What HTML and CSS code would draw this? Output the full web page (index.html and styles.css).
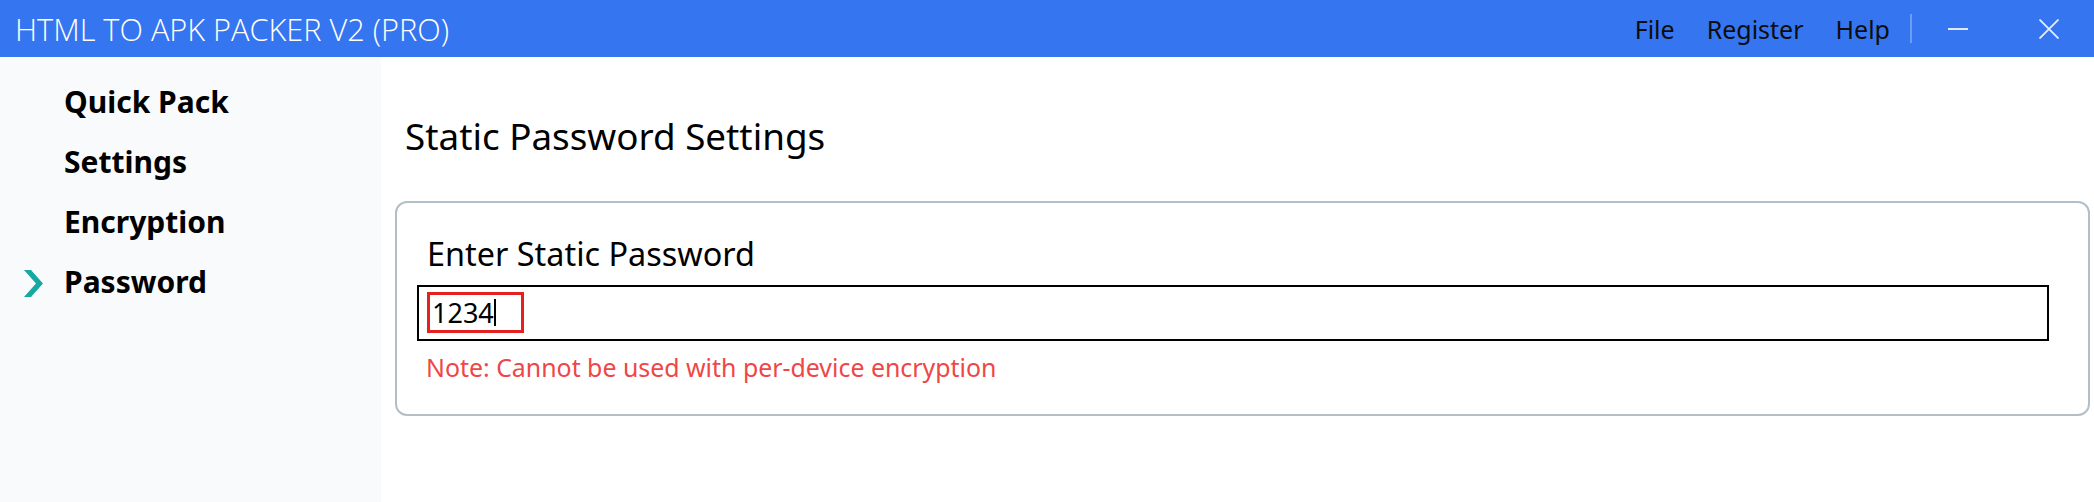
FILE: index.html
```html
<!DOCTYPE html>
<html lang="en">
<head>
<meta charset="utf-8">
<title>HTML TO APK PACKER V2 (PRO)</title>
<link rel="stylesheet" href="styles.css">
</head>
<body>
<div class="window">
  <header class="titlebar">
    <div class="title">HTML TO APK PACKER V2 (PRO)</div>
    <nav class="menu">
      <span class="menu-item">File</span>
      <span class="menu-item">Register</span>
      <span class="menu-item">Help</span>
    </nav>
    <div class="sep"></div>
    <div class="winbtn">
      <svg width="20" height="20" viewBox="0 0 20 20"><line x1="0" y1="10" x2="20" y2="10" stroke="#dfe8fd" stroke-width="2"/></svg>
    </div>
    <div class="winbtn close">
      <svg width="20" height="20" viewBox="0 0 20 20"><path d="M0.5 0.5 L19.5 19.5 M19.5 0.5 L0.5 19.5" stroke="#e6eefd" stroke-width="1.8" fill="none"/></svg>
    </div>
  </header>
  <div class="body">
    <aside class="sidebar">
      <div class="nav-item"><span class="marker"></span><span class="nav-text">Quick Pack</span></div>
      <div class="nav-item"><span class="marker"></span><span class="nav-text">Settings</span></div>
      <div class="nav-item"><span class="marker"></span><span class="nav-text">Encryption</span></div>
      <div class="nav-item active"><span class="marker"><svg width="19" height="27" viewBox="0 0 19 27"><polygon points="0,0 7,0 19,13.5 7,27 0,27 12,13.5" fill="#17a8a1"/></svg></span><span class="nav-text">Password</span></div>
    </aside>
    <main class="main">
      <h1 class="heading">Static Password Settings</h1>
      <section class="card">
        <div class="label">Enter Static Password</div>
        <div class="input"><span class="highlight"><span class="value">1234</span><span class="caret"></span></span></div>
        <div class="note">Note: Cannot be used with per-device encryption</div>
      </section>
    </main>
  </div>
</div>
</body>
</html>
```

FILE: styles.css
```css
* { box-sizing: border-box; }
html, body { margin: 0; padding: 0; }
body {
  width: 2094px;
  height: 502px;
  overflow: hidden;
  font-family: "Noto Sans", "Open Sans", "DejaVu Sans", sans-serif;
  color: #000;
  background: #fff;
}
.window { display: flex; flex-direction: column; height: 502px; }

.titlebar {
  height: 57px;
  flex: none;
  background: #3575f0;
  display: flex;
  align-items: center;
}
.title {
  flex: 1;
  padding-left: 15px;
  font-family: "Open Sans", "Noto Sans", sans-serif;
  font-weight: 300;
  font-size: 30.7px;
  color: #fff;
  white-space: nowrap;
}
.menu { display: flex; gap: 32px; align-items: center; }
.menu-item { font-size: 25px; color: #0d0d0d; line-height: 34px; }
.sep {
  width: 2px;
  height: 29px;
  background: #6d9df6;
  margin-left: 20px;
}
.winbtn {
  width: 92px;
  height: 57px;
  display: flex;
  align-items: center;
  justify-content: center;
}
.winbtn.close { width: 90px; }

.body { flex: 1; display: flex; min-height: 0; }
.sidebar {
  width: 381px;
  flex: none;
  background: #f9fafb;
  padding-top: 15px;
}
.nav-item {
  display: flex;
  align-items: center;
  height: 60px;
}
.marker {
  width: 64px;
  flex: none;
  display: flex;
  align-items: center;
  padding-left: 24px;
  padding-top: 3px;
}
.marker svg { display: block; }
.nav-text {
  font-weight: 700;
  font-size: 30px;
  line-height: 60px;
  white-space: nowrap;
}

.main {
  flex: 1;
  padding: 54px 4px 0 14px;
}
.heading {
  margin: 0 0 40px 10px;
  font-weight: 400;
  font-size: 36.8px;
  line-height: 50px;
}
.card {
  border: 2px solid #b2bfc8;
  border-radius: 12px;
  padding: 28px 39px 30px 20px;
}
.label {
  font-size: 32.4px;
  line-height: 44px;
  margin-left: 10px;
}
.input {
  margin-top: 10px;
  height: 56px;
  border: 2px solid #000;
  padding: 5px 0 0 8px;
}
.highlight {
  display: flex;
  align-items: center;
  width: 97px;
  height: 41px;
  border: 3px solid #e52020;
  padding-left: 2px;
}
.value { font-size: 27px; line-height: 35px; }
.caret { width: 2px; height: 27px; background: #000; }
.note {
  margin-top: 9px;
  margin-left: 9px;
  font-size: 24.9px;
  line-height: 34px;
  color: #ef4646;
}
```
